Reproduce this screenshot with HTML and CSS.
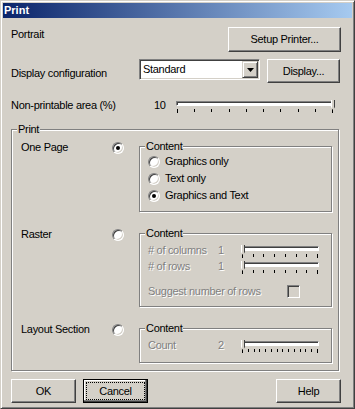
FILE: index.html
```html
<!DOCTYPE html>
<html lang="en">
<head>
  <meta charset="UTF-8">
  <title>Print</title>
  <link rel="stylesheet" href="styles.css">
</head>
<body>
  <div class="window">
    <div class="titlebar">Print</div>

    <div class="client">
      <!-- Orientation / printer -->
      <div class="row row-portrait">
        <span class="label">Portrait</span>
        <button class="btn btn-setup">Setup Printer...</button>
      </div>

      <div class="row row-display">
        <span class="label label-display">Display configuration</span>
        <div class="combo">
          <span class="combo-text">Standard</span>
          <span class="combo-arrow">
            <svg width="7" height="4" viewBox="0 0 7 4"><path d="M0 0h7L3.5 4z" fill="#000"/></svg>
          </span>
        </div>
        <button class="btn btn-display">Display...</button>
      </div>

      <div class="row row-area">
        <span class="label label-area">Non-printable area (%)</span>
        <span class="value-area">10</span>
        <div class="slider slider-area">
          <div class="track"><span class="thumb thumb-end"></span></div>
          <div class="ticks"><i></i><i></i><i></i><i></i><i></i><i></i><i></i><i></i><i></i><i></i></div>
        </div>
      </div>

      <!-- Print group -->
      <div class="group group-print">
        <span class="group-title">Print</span>

        <div class="section">
          <span class="section-label">One Page</span>
          <span class="radio checked"></span>
          <div class="group group-content content-page">
            <span class="group-title">Content</span>
            <div class="option"><span class="radio"></span>Graphics only</div>
            <div class="option"><span class="radio"></span>Text only</div>
            <div class="option"><span class="radio checked"></span>Graphics and Text</div>
          </div>
        </div>

        <div class="section">
          <span class="section-label">Raster</span>
          <span class="radio"></span>
          <div class="group group-content content-raster">
            <span class="group-title">Content</span>
            <div class="param">
              <span class="param-label disabled"># of columns</span>
              <span class="param-value disabled">1</span>
              <div class="slider slider-small">
                <div class="track"><span class="thumb"></span></div>
                <div class="ticks"><i></i><i></i><i></i><i></i><i></i><i></i><i></i><i></i></div>
              </div>
            </div>
            <div class="param">
              <span class="param-label disabled"># of rows</span>
              <span class="param-value disabled">1</span>
              <div class="slider slider-small">
                <div class="track"><span class="thumb"></span></div>
                <div class="ticks"><i></i><i></i><i></i><i></i><i></i><i></i><i></i><i></i></div>
              </div>
            </div>
            <div class="suggest">
              <span class="suggest-label disabled">Suggest number of rows</span>
              <span class="checkbox"></span>
            </div>
          </div>
        </div>

        <div class="section">
          <span class="section-label">Layout Section</span>
          <span class="radio"></span>
          <div class="group group-content content-layout">
            <span class="group-title">Content</span>
            <div class="param">
              <span class="param-label disabled">Count</span>
              <span class="param-value disabled">2</span>
              <div class="slider slider-small">
                <div class="track"><span class="thumb"></span></div>
                <div class="ticks"><i></i><i></i><i></i><i></i><i></i><i></i><i></i><i></i><i></i><i></i><i></i><i></i><i></i><i></i></div>
              </div>
            </div>
          </div>
        </div>
      </div>

      <!-- Dialog buttons -->
      <div class="row row-buttons">
        <button class="btn btn-dialog">OK</button>
        <button class="btn btn-dialog btn-default"><span class="focus">Cancel</span></button>
        <button class="btn btn-dialog btn-help">Help</button>
      </div>
    </div>
  </div>
</body>
</html>
```

FILE: styles.css
```css
body {
  margin: 0;
  background: #d4d0c8;
  color: #000;
  font-family: "Liberation Sans", Arial, sans-serif;
  font-size: 11px;
  line-height: 13px;
  letter-spacing: -0.3px;
}

.window {
  width: 355px;
  height: 409px;
  box-sizing: border-box;
  padding: 2px;
  background: #d4d0c8;
  border: 1px solid;
  border-color: #d4d0c8 #404040 #404040 #d4d0c8;
  box-shadow: inset 1px 1px 0 #fff, inset -1px -1px 0 #808080;
}

.titlebar {
  height: 15px;
  line-height: 15px;
  padding-left: 1px;
  color: #fff;
  font-weight: bold;
  letter-spacing: 0;
  background: linear-gradient(to right, #0a246a, #a6caf0);
}

.client {
  padding: 9px 11px 0 8px;
}

.row {
  display: flex;
  align-items: flex-start;
}

.row-portrait {
  height: 25px;
}

.row-portrait .label {
  flex: 1;
  margin-top: 1px;
}

.row-display {
  margin-top: 7px;
  height: 24px;
}

.label-display {
  width: 128px;
  margin-top: 8px;
}

.row-area {
  margin-top: 16px;
  height: 16px;
}

.label-area {
  width: 143px;
}

.value-area {
  width: 22px;
}

/* classic 3d button */
.btn {
  font: inherit;
  letter-spacing: inherit;
  color: #000;
  background: #d4d0c8;
  padding: 0;
  box-sizing: border-box;
  border: 1px solid;
  border-color: #fff #404040 #404040 #fff;
  box-shadow: inset -1px -1px 0 #808080;
  display: flex;
  align-items: center;
  justify-content: center;
}

.btn-setup {
  width: 113px;
  height: 25px;
}

.btn-display {
  width: 73px;
  height: 24px;
  margin-left: 7px;
}

.combo {
  width: 121px;
  height: 21px;
  box-sizing: border-box;
  padding: 1px;
  display: flex;
  background: #fff;
  border: 1px solid;
  border-color: #808080 #fff #fff #808080;
  box-shadow: inset 1px 1px 0 #404040, inset -1px -1px 0 #d4d0c8;
}

.combo-text {
  flex: 1;
  padding-left: 2px;
  line-height: 17px;
}

.combo-arrow {
  width: 16px;
  height: 17px;
  box-sizing: border-box;
  display: flex;
  align-items: center;
  justify-content: center;
  background: #d4d0c8;
  border: 1px solid;
  border-color: #d4d0c8 #404040 #404040 #d4d0c8;
  box-shadow: inset 1px 1px 0 #fff, inset -1px -1px 0 #808080;
}

/* trackbar */
.slider {
  display: flex;
  flex-direction: column;
  margin-top: 2px;
}

.slider-area {
  width: 159px;
}

.slider-small {
  width: 78px;
}

.track {
  position: relative;
  height: 5px;
  box-sizing: border-box;
  background: #fff;
  border: 1px solid;
  border-color: #808080 #fff #fff #808080;
  box-shadow: inset 1px 1px 0 #404040;
}

.thumb {
  position: absolute;
  top: -2px;
  left: -1px;
  width: 4px;
  height: 10px;
  box-sizing: border-box;
  background: #d4d0c8;
  border-left: 1px solid #fff;
  border-right: 1px solid #404040;
  clip-path: polygon(0 0, 100% 0, 100% 70%, 50% 100%, 0 70%);
}

.thumb-end {
  left: auto;
  right: -1px;
}

.ticks {
  display: flex;
  justify-content: space-between;
  align-items: flex-start;
  height: 4px;
  margin: 3px 0 0 1px;
}

.slider-area .ticks {
  width: 156px;
}

.slider-small .ticks {
  width: 76px;
}

.ticks i {
  width: 1px;
  height: 3px;
  background: #000;
}

.ticks i:first-child,
.ticks i:last-child {
  height: 4px;
}

/* etched group boxes */
.group {
  position: relative;
  box-sizing: border-box;
  border: 1px solid #808080;
  box-shadow: 1px 1px 0 #fff, inset 1px 1px 0 #fff;
}

.group-title {
  position: absolute;
  top: -7px;
  left: 5px;
  padding: 0 1px;
  background: #d4d0c8;
}

.group-print {
  width: 328px;
  margin-top: 14px;
  padding: 11px 6px 7px 9px;
}

.section {
  display: flex;
  align-items: flex-start;
}

.section + .section {
  margin-top: 16px;
}

.section-label {
  width: 91px;
}

.section > .radio {
  margin-top: 1px;
}

.group-content {
  width: 193px;
  margin: 5px 0 0 15px;
  padding-left: 8px;
}

.content-page {
  height: 66px;
  padding-top: 8px;
}

.content-raster {
  height: 74px;
  padding-top: 10px;
}

.content-layout {
  height: 35px;
  padding-top: 10px;
}

.radio {
  position: relative;
  flex: none;
  width: 12px;
  height: 12px;
  box-sizing: border-box;
  border-radius: 50%;
  background: #fff;
  border: 1px solid;
  border-color: #808080 #fff #fff #808080;
  box-shadow: inset 1px 1px 0 #404040, inset -1px -1px 0 #d4d0c8;
}

.radio.checked::after {
  content: "";
  position: absolute;
  left: 3px;
  top: 3px;
  width: 4px;
  height: 4px;
  border-radius: 50%;
  background: #000;
}

.option {
  display: flex;
  align-items: flex-start;
  height: 13px;
  margin-bottom: 4px;
}

.option .radio {
  margin: 1px 5px 0 0;
}

.param {
  display: flex;
  align-items: flex-start;
  height: 16px;
}

.param-label {
  width: 70px;
}

.param-value {
  width: 23px;
}

.disabled {
  color: #808080;
  text-shadow: 1px 1px 0 #fff;
}

.suggest {
  display: flex;
  margin-top: 9px;
}

.suggest-label {
  width: 139px;
}

.checkbox {
  width: 13px;
  height: 13px;
  box-sizing: border-box;
  background: #d4d0c8;
  border: 1px solid;
  border-color: #808080 #fff #fff #808080;
  box-shadow: inset 1px 1px 0 #404040, inset -1px -1px 0 #d4d0c8;
}

.row-buttons {
  margin-top: 8px;
}

.btn-dialog {
  width: 65px;
  height: 24px;
}

.btn-default {
  margin-left: 7px;
  border: 1px solid #000;
  box-shadow: inset -1px -1px 0 #404040, inset -2px -2px 0 #808080, inset 1px 1px 0 #fff;
}

.focus {
  width: 59px;
  height: 18px;
  box-sizing: border-box;
  border: 1px dotted #000;
  display: flex;
  align-items: center;
  justify-content: center;
}

.btn-help {
  margin-left: auto;
}
```
